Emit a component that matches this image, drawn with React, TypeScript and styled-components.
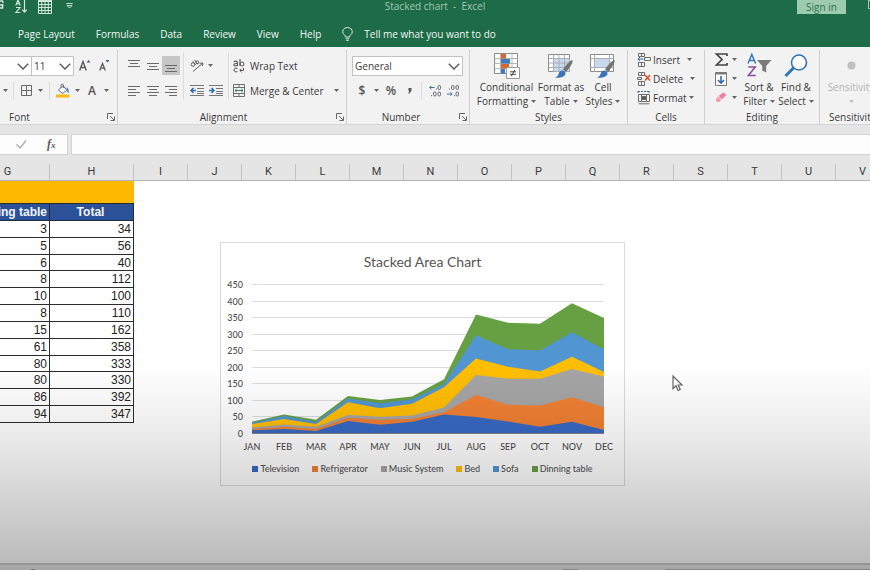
import React from "react";
import styled, { createGlobalStyle } from "styled-components";

const UI = `"Open Sans", "Noto Sans", sans-serif`;
const SHEET = `"Liberation Sans", Arial, sans-serif`;
const CHART = `Lato, "Open Sans", sans-serif`;

const GlobalStyle = createGlobalStyle`
  *, *::before, *::after { box-sizing: border-box; }
  body { margin: 0; overflow: hidden; background: #fff; }
  button, select, input { font: inherit; color: inherit; margin: 0; padding: 0; border: 0; background: none; border-radius: 0; }
  button { cursor: pointer; }
  svg { display: block; flex: none; overflow: visible; }
`;

const Window = styled.div`
  display: flex;
  flex-direction: column;
  height: 100vh;
  overflow: hidden;
  position: relative;
  font-family: ${UI};
  font-size: 10px;
  font-weight: 500;
  line-height: 14px;
  color: #3a3a3a;
`;

/* ---------- title bar and tabs ---------- */

const TitleBar = styled.header`
  display: grid;
  grid-template-columns: 1fr auto 1fr;
  align-items: start;
  height: 20px;
  background: #1e6b47;
  color: #a3c8b3;
`;
const QuickAccess = styled.div`
  display: flex;
  align-items: flex-start;
`;
const QuickButton = styled.button<{ $w: number }>`
  display: flex;
  justify-content: center;
  width: ${(p) => p.$w}px;
  height: 15px;
  color: #d3e6da;
`;
const DocTitle = styled.h1`
  margin: 0;
  font-size: 10px;
  line-height: 13px;
  font-weight: 400;
  white-space: pre;
`;
const TitleRight = styled.div`
  display: flex;
  justify-content: flex-end;
  gap: 22px;
`;
const SignIn = styled.button`
  width: 49px;
  height: 14px;
  line-height: 13px;
  background: #9ccbb0;
  color: #2c7350;
`;
const DisplayOptions = styled.button`
  width: 2px;
  height: 9px;
  border: 1px solid #a3c8b3;
  border-right: 0;
`;
const Tabs = styled.nav`
  display: flex;
  align-items: center;
  gap: 21px;
  height: 27px;
  padding-left: 18px;
  background: #1e6b47;
  color: #f0f8f3;
`;
const Tab = styled.button`
  white-space: nowrap;
`;
const TellMe = styled.button`
  display: flex;
  align-items: center;
  gap: 11px;
  white-space: nowrap;
`;

/* ---------- ribbon ---------- */

const Ribbon = styled.div`
  display: flex;
  height: 78px;
  background: #f2f2f2;
  border-bottom: 1px solid #d4d4d4;
  overflow: hidden;
`;
const Group = styled.section<{ $w: number; $last?: boolean }>`
  display: flex;
  flex-direction: column;
  flex: ${(p) => (p.$last ? "1 0" : "0 0")} ${(p) => p.$w}px;
  min-width: 0;
  margin: 3px 0 0;
  border-right: ${(p) => (p.$last ? "0" : "1px solid #cfcfcf")};
`;
const GroupBody = styled.div<{ $pad?: number; $top?: number }>`
  display: flex;
  flex: 1;
  padding-left: ${(p) => p.$pad ?? 0}px;
  padding-top: ${(p) => p.$top ?? 3}px;
`;
const GroupFoot = styled.footer<{ $shift?: number; $start?: number }>`
  display: flex;
  justify-content: ${(p) => (p.$start ? "flex-start" : "center")};
  align-items: center;
  position: relative;
  height: 14px;
  padding-right: ${(p) => p.$shift ?? 0}px;
  padding-left: ${(p) => p.$start ?? 0}px;
  white-space: nowrap;
`;
const Launcher = styled.button`
  position: absolute;
  right: 2px;
  top: 3px;
`;
const Stack = styled.div`
  display: flex;
  flex-direction: column;
`;
const Line = styled.div<{ $h?: number }>`
  display: flex;
  align-items: center;
  height: ${(p) => p.$h ?? 25}px;
`;
const Slot = styled.button<{ $w: number; $on?: boolean }>`
  display: flex;
  align-items: center;
  justify-content: center;
  flex: none;
  width: ${(p) => p.$w}px;
  height: 19px;
  background: ${(p) => (p.$on ? "#c6c6c6" : "transparent")};
`;
const Rule = styled.span<{ $h?: number }>`
  flex: none;
  width: 1px;
  height: ${(p) => p.$h ?? 18}px;
  margin: 0 4px 0 3px;
  background: #dcdcdc;
`;
const Combo = styled.div<{ $w: number; $cut?: boolean }>`
  position: relative;
  width: ${(p) => p.$w}px;
  height: 20px;
  border: 1px solid #c3c3c3;
  border-left-width: ${(p) => (p.$cut ? 0 : 1)}px;
  margin-right: ${(p) => (p.$cut ? -1 : 0)}px;
  background: #fff;
  & > svg { position: absolute; right: 2px; top: 6px; pointer-events: none; }
`;
const ComboSelect = styled.select`
  appearance: none;
  display: block;
  width: 100%;
  height: 18px;
  padding-left: 2px;
  line-height: 18px;
`;
const Command = styled.button<{ $gap?: number }>`
  display: flex;
  align-items: center;
  gap: ${(p) => p.$gap ?? 4}px;
  white-space: nowrap;
`;
const CaretGap = styled.span`
  display: flex;
  margin-left: 5px;
`;
const Big = styled.button<{ $w: number; $dim?: boolean }>`
  display: flex;
  flex-direction: column;
  align-items: center;
  flex: none;
  width: ${(p) => p.$w}px;
  opacity: ${(p) => (p.$dim ? 0.35 : 1)};
`;
const BigIcon = styled.span`
  display: flex;
  align-items: center;
  justify-content: center;
  height: 29px;
`;
const BigText = styled.span`
  display: flex;
  align-items: center;
  justify-content: center;
  gap: 3px;
  height: 14px;
  white-space: nowrap;
`;
const Glyph = styled.span<{ $size: number }>`
  font-size: ${(p) => p.$size}px;
  font-weight: 600;
  color: #555;
`;

/* ---------- formula bar and sheet ---------- */

const FormulaRow = styled.div`
  display: flex;
  gap: 3px;
  padding: 9px 0;
  background: #e5e5e5;
`;
const FormulaTools = styled.div`
  display: flex;
  align-items: center;
  width: 68px;
  height: 21px;
  padding-left: 13px;
  gap: 20px;
  background: #fdfdfd;
  border: 1px solid #d3d3d3;
  border-left: 0;
`;
const FxButton = styled.button`
  font-family: "Liberation Serif", serif;
  font-style: italic;
  font-weight: 700;
  font-size: 12px;
  color: #606060;
  & > small { font-size: 9px; }
`;
const FormulaInput = styled.input`
  flex: 1;
  height: 21px;
  padding: 0 4px;
  background: #fdfdfd;
  border: 1px solid #d3d3d3;
  border-right: 0;
`;
const ColumnHeads = styled.div`
  display: grid;
  grid-template-columns: 50px 84px repeat(14, 54px);
  height: 17px;
  background: #e5e5e5;
  border-bottom: 1px solid #b5b5b5;
  overflow: hidden;
  font-family: Roboto, ${SHEET};
  font-size: 11px;
  font-weight: 400;
`;
const ColumnHead = styled.div<{ $shift?: number }>`
  border-right: 1px solid #c2c2c2;
  padding-right: ${(p) => p.$shift ?? 0}px;
  text-align: center;
  line-height: 16px;
`;
const Sheet = styled.main`
  position: relative;
  flex: 1;
  background: #fff;
`;
const Data = styled.table`
  width: 134px;
  height: 242px;
  table-layout: fixed;
  border-collapse: separate;
  border-spacing: 0;
  font-family: ${SHEET};
  font-size: 12px;
  font-weight: 400;
  line-height: 14px;
  color: #222;
  & tbody td {
    padding: 0 2px 0 0;
    text-align: right;
    border-right: 1px solid #2b2b2b;
    border-bottom: 1px solid #2b2b2b;
  }
`;
const Band = styled.td`
  height: 23px;
  padding: 0;
  background: #ffb900;
  border-bottom: 1px solid #2b2b2b;
`;
const Heading = styled.th`
  height: 17px;
  padding: 0 2px 0 0;
  background: #2b5299;
  color: #f2f5fa;
  border-right: 1px solid #1d2a44;
  border-bottom: 1px solid #1d2a44;
`;
const Clip = styled.span<{ $end?: boolean }>`
  display: flex;
  justify-content: ${(p) => (p.$end ? "flex-end" : "center")};
  overflow: hidden;
  white-space: nowrap;
`;

/* ---------- chart object ---------- */

const ChartBox = styled.figure`
  position: absolute;
  left: 220px;
  top: 61px;
  width: 405px;
  height: 244px;
  margin: 0;
  padding-top: 10px;
  background: #fff;
  border: 1px solid #dadada;
  font-family: ${CHART};
  color: #555;
`;
const ChartTitle = styled.figcaption`
  text-align: center;
  font-size: 14px;
  font-weight: 400;
  line-height: 18px;
`;
const Legend = styled.ul`
  display: flex;
  justify-content: center;
  gap: 13px;
  margin: 0;
  padding: 0;
  list-style: none;
  font-size: 9px;
  line-height: 16px;
`;
const LegendItem = styled.li<{ $c: string }>`
  display: flex;
  align-items: center;
  gap: 2px;
  white-space: nowrap;
  &::before { content: ""; width: 6px; height: 6px; background: ${(p) => p.$c}; }
`;
const Shade = styled.div`
  position: absolute;
  left: 0;
  right: 0;
  bottom: 0;
  height: 205px;
  pointer-events: none;
  background: linear-gradient(rgba(0, 0, 0, 0), rgba(0, 0, 0, 0.085) 37%, rgba(0, 0, 0, 0.28));
`;
const Pointer = styled.svg`
  position: absolute;
  left: 672px;
  top: 194px;
`;
const StatusBar = styled.footer`
  display: grid;
  grid-template-columns: 27px 1fr 15px 87px 205px;
  height: 7px;
  padding-top: 4px;
  overflow: hidden;
  background: #e6e6e6;
  border-top: 2px solid #cbcbcb;
`;
const RecordDot = styled.span`
  width: 12px;
  height: 12px;
  border-radius: 6px;
  background: #999;
`;
const StatusMark = styled.span`
  height: 4px;
  background: #b4b4b4;
`;

/* ---------- icons ---------- */

const Caret = ({ c = "#666" }: { c?: string }) => (
  <svg width="5" height="3" viewBox="0 0 5 3"><path d="M0 0h5L2.5 3z" fill={c} /></svg>
);
const Chevron = () => (
  <svg width="12" height="7" viewBox="0 0 12 7"><path d="M.8.8 6 6 11.2.8" fill="none" stroke="#555" strokeWidth="1.3" /></svg>
);
const LaunchIcon = () => (
  <svg width="8" height="8" viewBox="0 0 8 8" fill="none" stroke="#666"><path d="M.5 6V.5H6M3 3l4 4M7.5 3.500v4h-4" /></svg>
);
const Lines = ({ rows }: { rows: [number, number, number][] }) => (
  <svg width="12" height="12" viewBox="0 0 12 12" stroke="#6a6a6a">
    {rows.map(([x1, x2, y]) => <path key={y} d={`M${x1} ${y}H${x2}`} />)}
  </svg>
);
const IndentIcon = ({ out }: { out?: boolean }) => (
  <svg width="14" height="12" viewBox="0 0 14 12" fill="none">
    <path d="M0 .5h14M7 3.500h7M7 6.500h7M0 10.500h14M7 8.500h7" stroke="#777" />
    {out ? <path d="M6 5.500H1M3.500 3 1 5.500 3.500 8" stroke="#2b6cb0" strokeWidth="1.500" />
      : <path d="M0 5.500h5M2.500 3 5 5.500 2.500 8" stroke="#2b6cb0" strokeWidth="1.500" />}
  </svg>
);
const SortAZ = () => (
  <svg width="13" height="14" viewBox="0 0 13 14" fill="none" stroke="currentColor">
    <path d="M.8 5.500 3 0l2.200 5.500M1.600 3.700h2.800M1 7.500h4L1 12.500h4.300M9.500 0v12M7.300 9.700l2.200 2.500 2.200-2.500" strokeWidth="1.200" />
  </svg>
);
const GridIcon = () => (
  <svg width="14" height="14" viewBox="0 0 14 14" fill="none" stroke="currentColor">
    <path d="M.5 0v13.500h13V0M.5 1.500h13M.5 4.500h13M.5 7.500h13M.5 10.500h13M3.700 1v12M7 1v12M10.300 1v12" />
    <path d="M.5 1h13" strokeWidth="2" />
  </svg>
);
const Customize = () => (
  <svg width="7" height="10" viewBox="0 0 7 10" fill="none" stroke="currentColor"><path d="M.3 3.500h6.400M1 5.500h5L3.500 8z" strokeWidth=".9" /></svg>
);
const Bulb = () => (
  <svg width="11" height="14" viewBox="0 0 11 14" fill="none" stroke="#dcece2">
    <path d="M3.500 10c0-2-2.800-2.600-2.800-5.200a4.800 4.300 0 0 1 9.600 0C10.300 7.400 7.500 8 7.500 10zM3.700 11.800h3.600M4.300 13.400h2.400" />
  </svg>
);
const GrowA = ({ down }: { down?: boolean }) => (
  <svg width={down ? 11 : 12} height="13" viewBox={down ? "0 0 11 13" : "0 0 12 13"} fill="none" stroke="#5a5a5a">
    {down ? <path d="M.7 11.500 3.500 4.500l2.800 7M1.700 9.200h3.600" strokeWidth="1.300" />
      : <path d="M.7 11.500 4 2.500l3.300 9M1.900 8.500h4.200" strokeWidth="1.400" />}
    {down ? <path d="M6.500 1h4L8.500 3.500z" fill="#3d5a80" stroke="none" />
      : <path d="M7.500 3.500h4L9.500 1z" fill="#3d5a80" stroke="none" />}
  </svg>
);
const Borders = () => (
  <svg width="11" height="11" viewBox="0 0 11 11" fill="none" stroke="#6a6a6a"><path d="M.5.5h10v10H.5zM5.500.5v10M.5 5.500h10" /></svg>
);
const Fill = () => (
  <svg width="14" height="14" viewBox="0 0 14 14" fill="none">
    <path d="M2.500 6 7 1.800l3.800 4.400L6.500 9.500z" fill="#fff" stroke="#5c6b7c" />
    <path d="M5 4V1.500a1.300 1.300 0 0 1 2.600 0V4" stroke="#5c6b7c" />
    <path d="M10 3.500c2 0 3 2 2.800 5.500-1.500-.5-1.800-2-1.500-3.500z" fill="#3272b5" />
    <path d="M0 10.500h13.500v3H0z" fill="#fdb913" />
  </svg>
);
const Orient = () => (
  <svg width="14" height="13" viewBox="0 0 14 13" fill="none" stroke="#5f5f5f">
    <circle cx="3" cy="5.500" r="1.800" /><path d="M2.800 2.200 5.700 6M4.500.8 8 5.200" />
    <circle cx="7.300" cy="3.300" r="1.500" /><path d="M3 12.500 12.800 4M12.800 4l-3.200.3M12.800 4l-.4 3.200" />
  </svg>
);
const WrapIcon = () => (
  <svg width="12" height="14" viewBox="0 0 12 14" fill="none" stroke="#555">
    <path d="M.8 2.800C3 1.500 4.500 2.300 4.500 4v3M4.500 4.600C2.500 4.400.8 4.800.8 6s2.500 1.400 3.700 0M7 0v7" strokeWidth="1.100" /><circle cx="9" cy="5" r="2" />
    <path d="M4.500 9.500C2.500 8.500 1 9.500 1 11s1.500 2.400 3.500 1.600M10.500 9v2.500H7M8.500 9.800 6.800 11.500l1.700 1.700" />
  </svg>
);
const MergeIcon = () => (
  <svg width="12" height="13" viewBox="0 0 12 13" fill="none" stroke="#6f6f6f">
    <path d="M.5.5h11v12H.5zM.5 3.500h11M.5 9.500h11M6 .5v3M6 9.500v3" />
    <path d="M2 6.500h8M3.700 4.900 2 6.500l1.700 1.600M8.300 4.900 10 6.500 8.300 8.100" stroke="#3d7a64" />
  </svg>
);
const Decimal = ({ less }: { less?: boolean }) => (
  <svg width="13" height="12" viewBox="0 0 13 12" fill="none" stroke="#666">
    {less ? (
      <>
        <rect x="4.500" y=".5" width="2.500" height="4" rx="1.200" /><rect x="9" y=".5" width="2.500" height="4" rx="1.200" />
        <rect x="9" y="7" width="2.500" height="4" rx="1.200" /><path d="M0 9h5M3.500 7.300 5.200 9 3.500 10.700" stroke="#3b6ea8" />
        <path d="M2 4h1M7 10.700h1" />
      </>
    ) : (
      <>
        <rect x="9" y=".5" width="2.500" height="4" rx="1.200" /><rect x="4.500" y="7" width="2.500" height="4" rx="1.200" />
        <rect x="9" y="7" width="2.500" height="4" rx="1.200" /><path d="M5.500 2.500H.7M2.400.8.7 2.500l1.700 1.700" stroke="#3b6ea8" />
        <path d="M7 4h1M2 10.700h1" />
      </>
    )}
  </svg>
);
const CondIcon = () => (
  <svg width="26" height="26" viewBox="0 0 26 26" fill="none">
    <path d="M.5.5h23v20H.5z" fill="#fff" stroke="#8a8a8a" />
    <path d="M.5 5.500h23M.5 10.500h23M.5 15.500h23M6.500.5v20M18 .5v20" stroke="#b5b5b5" />
    <path d="M7 1h5v4.500H7zM7 11h8v4.500H7z" fill="#d9642c" /><path d="M7 6h9v4.500H7zM7 16h4v4.500H7z" fill="#3d7dbf" />
    <path d="M12.500 14.500h13v11h-13z" fill="#fff" stroke="#999" />
    <path d="M16 18.800h6M16 21.300h6M20.800 16.800l-3.500 6.500" stroke="#444" />
  </svg>
);
const Brush = () => (
  <>
    <path d="M24.500 6.500c1.500 1-4 9-6.500 11.500l-3-2.500c2-3 8-10.500 9.500-9z" fill="#747474" />
    <path d="M14.500 16.500c2 .3 3.200 1.700 3 3.200-.5 3-5 4.500-10.500 3.800 2.500-.7 3-2 3.700-4 .6-2 2-3.200 3.800-3z" fill="#3b74b8" />
  </>
);
const TableStyle = () => (
  <svg width="26" height="24" viewBox="0 0 26 24" fill="none">
    <path d="M.5.5h21v17H.5z" fill="#fff" stroke="#8a8a8a" /><path d="M5.500 5h16v12.500h-16z" fill="#c9d8ec" />
    <path d="M.5 4.500h21M.5 9h21M.5 13.500h21M5.500.5v17M11 .5v17M16.500.5v17" stroke="#a9b0ba" /><Brush />
  </svg>
);
const CellStyle = () => (
  <svg width="26" height="24" viewBox="0 0 26 24" fill="none">
    <path d="M.5.5h23v17H.5z" fill="#fff" stroke="#8a8a8a" /><path d="M5 4.500h14v9H5z" fill="#c9d8ec" />
    <path d="M.5 4.500h23M.5 13.500h23M4.500.5v17M19.500.5v17" stroke="#a9b0ba" /><Brush />
  </svg>
);
const InsertIcon = () => (
  <svg width="14" height="14" viewBox="0 0 14 14" fill="none" stroke="#6d6d6d">
    <path d="M1.500.5h6v3h-6zM4.500.5v3M1.500 9.500h6v4h-6zM4.500 9.500v4M7.500 4.500h6v3h-6z" /><path d="M6.500 6H1M3 4 1 6l2 2" stroke="#2b6cb0" />
  </svg>
);
const DeleteIcon = () => (
  <svg width="14" height="14" viewBox="0 0 14 14" fill="none" stroke="#6d6d6d">
    <path d="M1.500.5h6v3h-6zM4.500.5v3M1.500 9.500h6v4h-6zM4.500 9.500v4M.5 5.500h4v2h-4z" /><path d="M8 3l5 5.500M13 3 8 8.500" stroke="#d9482b" strokeWidth="1.400" />
  </svg>
);
const FormatIcon = () => (
  <svg width="14" height="14" viewBox="0 0 14 14" fill="none" stroke="#6d6d6d">
    <path d="M1 .5h11M1 0v2M12 0v2" stroke="#3d6a9e" strokeDasharray="2 1" /><path d="M1.500 3.500h11v7h-11zM1.500 12.800h11M4.500 3.500v7M9.500 3.500v7" /><path d="M5 5.500h4v3H5z" fill="#555" />
  </svg>
);
const Sigma = () => (
  <svg width="13" height="13" viewBox="0 0 13 13" fill="none" stroke="#444"><path d="M12 3V1H1.500L7 6.500 1.500 12H12v-2" strokeWidth="1.700" /></svg>
);
const FillDown = () => (
  <svg width="12" height="14" viewBox="0 0 12 14" fill="none">
    <path d="M.5.5h11v13H.5z" fill="#fff" stroke="#7b7b7b" /><path d="M0 1.500h12" stroke="#7b7b7b" strokeWidth="2" /><path d="M6 4v7M3 8l3 3.200L9 8" stroke="#2b6cb0" strokeWidth="1.600" />
  </svg>
);
const Eraser = () => (
  <svg width="12" height="11" viewBox="0 0 12 11"><path d="m3.500 4 5-3.800 3 3-4.700 4z" fill="#ee8298" /><path d="m2.900 4.500 3.300 3.200L4.500 10H2.200L.5 8.200z" fill="#f19bab" /></svg>
);
const SortFilter = () => (
  <svg width="25" height="23" viewBox="0 0 25 23" fill="none">
    <path d="M1 9.500 4.800.5l3.800 9M2.300 6.500h5" stroke="#3c76b5" strokeWidth="1.500" /><path d="M1.300 13h7L1.300 21.500h7.500" stroke="#8a4ba0" strokeWidth="1.500" />
    <path d="M10 6h14.500l-5.300 6v6.500l-4-2V12z" fill="#7a7a7a" />
  </svg>
);
const FindIcon = () => (
  <svg width="24" height="24" viewBox="0 0 24 24" fill="none" stroke="#2f73b8">
    <circle cx="15" cy="8.500" r="7.500" fill="#fff" strokeWidth="1.600" /><path d="M9.500 14 1.500 22" strokeWidth="3" />
  </svg>
);
const Check = () => (
  <svg width="14" height="9" viewBox="0 0 14 9" fill="none" stroke="#b0b0b0"><path d="M3.500 4.500 7 8l6-7.500" strokeWidth="1.500" /></svg>
);

/* ---------- data ---------- */

const ROWS = [[3, 34], [5, 56], [6, 40], [8, 112], [10, 100], [8, 110], [15, 162], [61, 358], [80, 333], [80, 330], [86, 392], [94, 347]];
const MONTHS = ["JAN", "FEB", "MAR", "APR", "MAY", "JUN", "JUL", "AUG", "SEP", "OCT", "NOV", "DEC"];
const SERIES = [
  { name: "Television", color: "#3769c4", top: [8, 12, 6, 36, 25, 34, 56, 48, 35, 19, 34, 9] },
  { name: "Refrigerator", color: "#f08033", top: [12, 19, 12, 46, 40, 43, 63, 115, 85, 83, 108, 78] },
  { name: "Music System", color: "#a5a5a5", top: [17, 26, 19, 54, 49, 53, 77, 175, 164, 164, 193, 171] },
  { name: "Bed", color: "#ffbe00", top: [27, 42, 27, 93, 75, 88, 138, 225, 200, 186, 230, 184] },
  { name: "Sofa", color: "#5196d3", top: [31, 51, 34, 104, 90, 102, 147, 295, 253, 249, 304, 252] },
  { name: "Dinning table", color: "#67a043", top: ROWS.map((r) => r[1]) },
];
const LETTERS = "GHIJKLMNOPQRSTUV".split("");

const px = (i: number) => 31 + (i * 352) / 11;
const py = (v: number) => 162 - (v * 149) / 450;

const Plot = () => (
  <svg width="403" height="190" viewBox="0 0 403 190" role="img" aria-label="Stacked area chart">
    {Array.from({ length: 10 }, (_, i) => i * 50).map((v) => (
      <g key={v}>
        <path d={`M31 ${Math.round(py(v)) + 0.5}H383`} stroke="#dcdedf" />
        <text x="22" y={Math.round(py(v)) + 4} textAnchor="end" fontSize="9" fill="#505050">{v}</text>
      </g>
    ))}
    {[...SERIES].reverse().map((s) => (
      <path key={s.name} fill={s.color} d={`M31 162.500 ${s.top.map((v, i) => `L${px(i)} ${py(v)}`).join(" ")} L383 162.500z`} />
    ))}
    {MONTHS.map((m, i) => (
      <text key={m} x={px(i)} y="179" textAnchor="middle" fontSize="9" fill="#505050">{m}</text>
    ))}
  </svg>
);

export default function App() {
  return (
    <Window>
      <GlobalStyle />
      <TitleBar>
        <QuickAccess>
          <QuickButton $w={8} aria-label="Touch mode">
            <svg width="8" height="9" viewBox="0 0 8 9" fill="none" stroke="currentColor"><path d="M0 1.500C2 0 3 1 3 3M0 5h3.500M0 8h2.500V4" strokeWidth="1.500" /></svg>
          </QuickButton>
          <QuickButton $w={26} aria-label="Sort ascending"><SortAZ /></QuickButton>
          <QuickButton $w={22} aria-label="Table"><GridIcon /></QuickButton>
          <QuickButton $w={26} aria-label="Customize toolbar"><Customize /></QuickButton>
        </QuickAccess>
        <DocTitle>{"Stacked chart  -  Excel"}</DocTitle>
        <TitleRight>
          <SignIn>Sign in</SignIn>
          <DisplayOptions aria-label="Ribbon display options" />
        </TitleRight>
      </TitleBar>
      <Tabs>
        {["Page Layout", "Formulas", "Data", "Review", "View", "Help"].map((t) => <Tab key={t}>{t}</Tab>)}
        <TellMe><Bulb />Tell me what you want to do</TellMe>
      </Tabs>

      <Ribbon>
        <Group $w={118}>
          <GroupBody>
            <Stack>
              <Line>
                <Combo $w={32} $cut><ComboSelect aria-label="Font" defaultValue=""><option value="" /></ComboSelect><Chevron /></Combo>
                <Combo $w={43}><ComboSelect aria-label="Font size"><option>11</option></ComboSelect><Chevron /></Combo>
                <Slot $w={21} aria-label="Increase font size"><GrowA /></Slot>
                <Slot $w={18} aria-label="Decrease font size"><GrowA down /></Slot>
              </Line>
              <Line>
                <Slot $w={10} aria-label="Underline options"><Caret /></Slot>
                <Rule />
                <Slot $w={17} aria-label="Borders"><Borders /></Slot>
                <Slot $w={11} aria-label="Border options"><Caret /></Slot>
                <Rule />
                <Slot $w={18} aria-label="Fill color"><Fill /></Slot>
                <Slot $w={10} aria-label="Fill options"><Caret /></Slot>
                <Slot $w={20} aria-label="Font color"><Glyph $size={12}>A</Glyph></Slot>
                <Slot $w={8} aria-label="Font color options"><Caret /></Slot>
              </Line>
            </Stack>
          </GroupBody>
          <GroupFoot $shift={78}>Font<Launcher aria-label="Font settings"><LaunchIcon /></Launcher></GroupFoot>
        </Group>

        <Group $w={229}>
          <GroupBody $pad={7}>
            <Stack>
              <Line>
                <Slot $w={18} aria-label="Top align"><Lines rows={[[0, 12, 0.5], [2, 10, 3.5], [0, 12, 6.5]]} /></Slot>
                <Slot $w={19} aria-label="Middle align"><Lines rows={[[0, 12, 3.5], [2, 10, 6.5], [0, 12, 9.5]]} /></Slot>
                <Slot $w={18} $on aria-label="Bottom align"><Lines rows={[[0, 12, 5.5], [2, 10, 8.5], [0, 12, 11.5]]} /></Slot>
              </Line>
              <Line>
                <Slot $w={18} aria-label="Align left"><Lines rows={[[0, 12, 1.5], [0, 8, 4.5], [0, 12, 7.5], [0, 8, 10.5]]} /></Slot>
                <Slot $w={19} aria-label="Center"><Lines rows={[[0, 12, 1.5], [2, 10, 4.5], [0, 12, 7.5], [2, 10, 10.5]]} /></Slot>
                <Slot $w={18} aria-label="Align right"><Lines rows={[[0, 12, 1.5], [4, 12, 4.5], [0, 12, 7.5], [4, 12, 10.5]]} /></Slot>
              </Line>
            </Stack>
            <Rule $h={46} />
            <Stack>
              <Line>
                <Slot $w={18} aria-label="Orientation"><Orient /></Slot>
                <Slot $w={8} aria-label="Orientation options"><Caret /></Slot>
              </Line>
              <Line>
                <Slot $w={18} aria-label="Decrease indent"><IndentIcon out /></Slot>
                <Slot $w={19} aria-label="Increase indent"><IndentIcon /></Slot>
              </Line>
            </Stack>
            <Rule $h={46} />
            <Stack>
              <Line><Command $gap={5}><WrapIcon />Wrap Text</Command></Line>
              <Line><Command $gap={5}><MergeIcon />Merge &amp; Center<CaretGap><Caret /></CaretGap></Command></Line>
            </Stack>
          </GroupBody>
          <GroupFoot $shift={17}>Alignment<Launcher aria-label="Alignment settings"><LaunchIcon /></Launcher></GroupFoot>
        </Group>

        <Group $w={123}>
          <GroupBody $pad={5}>
            <Stack>
              <Line><Combo $w={111}><ComboSelect aria-label="Number format"><option>General</option></ComboSelect><Chevron /></Combo></Line>
              <Line>
                <Slot $w={20} aria-label="Accounting format"><Glyph $size={12}>$</Glyph></Slot>
                <Slot $w={8} aria-label="Currency options"><Caret /></Slot>
                <Slot $w={22} aria-label="Percent style"><Glyph $size={12}>%</Glyph></Slot>
                <Slot $w={16} aria-label="Comma style"><svg width="4" height="6" viewBox="0 0 4 6"><path d="M.5 0h3v2.500L1.500 5.500H.3L1.200 3H.5z" fill="#555" /></svg></Slot>
                <Rule />
                <Slot $w={18} aria-label="Increase decimal"><Decimal /></Slot>
                <Slot $w={18} aria-label="Decrease decimal"><Decimal less /></Slot>
              </Line>
            </Stack>
          </GroupBody>
          <GroupFoot $shift={14}>Number<Launcher aria-label="Number settings"><LaunchIcon /></Launcher></GroupFoot>
        </Group>

        <Group $w={158}>
          <GroupBody $pad={6} $top={1}>
            <Big $w={61}><BigIcon><CondIcon /></BigIcon><BigText>Conditional</BigText><BigText>Formatting <Caret /></BigText></Big>
            <Big $w={48}><BigIcon><TableStyle /></BigIcon><BigText>Format as</BigText><BigText>Table <Caret /></BigText></Big>
            <Big $w={36}><BigIcon><CellStyle /></BigIcon><BigText>Cell</BigText><BigText>Styles <Caret /></BigText></Big>
          </GroupBody>
          <GroupFoot>Styles</GroupFoot>
        </Group>

        <Group $w={77}>
          <GroupBody $pad={9} $top={0}>
            <Stack>
              <Line $h={19}><Command $gap={2}><InsertIcon />Insert<CaretGap><Caret /></CaretGap></Command></Line>
              <Line $h={19}><Command $gap={2}><DeleteIcon />Delete<CaretGap><Caret /></CaretGap></Command></Line>
              <Line $h={19}><Command $gap={2}><FormatIcon />Format<Caret /></Command></Line>
            </Stack>
          </GroupBody>
          <GroupFoot>Cells</GroupFoot>
        </Group>

        <Group $w={115}>
          <GroupBody $pad={7} $top={0}>
            <Stack>
              <Line $h={19}><Slot $w={18} aria-label="AutoSum"><Sigma /></Slot><Slot $w={9} aria-label="AutoSum options"><Caret /></Slot></Line>
              <Line $h={19}><Slot $w={18} aria-label="Fill"><FillDown /></Slot><Slot $w={9} aria-label="Fill direction"><Caret /></Slot></Line>
              <Line $h={19}><Slot $w={18} aria-label="Clear"><Eraser /></Slot><Slot $w={9} aria-label="Clear options"><Caret /></Slot></Line>
            </Stack>
            <Stack>
              <Line $h={59}>
                <Big $w={40}><BigIcon><SortFilter /></BigIcon><BigText>Sort &amp;</BigText><BigText>Filter <Caret /></BigText></Big>
                <Big $w={34}><BigIcon><FindIcon /></BigIcon><BigText>Find &amp;</BigText><BigText>Select <Caret /></BigText></Big>
              </Line>
            </Stack>
          </GroupBody>
          <GroupFoot>Editing</GroupFoot>
        </Group>

        <Group $w={50} $last>
          <GroupBody $pad={8} $top={1}>
            <Big $w={46} $dim disabled>
              <BigIcon><svg width="9" height="9" viewBox="0 0 9 9"><circle cx="4.500" cy="4.500" r="4" fill="#666" /></svg></BigIcon>
              <BigText>Sensitivity</BigText>
              <BigText><Caret /></BigText>
            </Big>
          </GroupBody>
          <GroupFoot $start={9}>Sensitivity</GroupFoot>
        </Group>
      </Ribbon>

      <FormulaRow>
        <FormulaTools>
          <button aria-label="Enter"><Check /></button>
          <FxButton aria-label="Insert function">f<small>x</small></FxButton>
        </FormulaTools>
        <FormulaInput aria-label="Formula bar" />
      </FormulaRow>
      <ColumnHeads>
        {LETTERS.map((l) => <ColumnHead key={l} $shift={l === "G" ? 34 : 0}>{l}</ColumnHead>)}
      </ColumnHeads>

      <Sheet>
        <Data>
          <colgroup><col width="50" /><col width="84" /></colgroup>
          <thead>
            <tr><Band colSpan={2} /></tr>
            <tr>
              <Heading scope="col"><Clip $end>Dinning table</Clip></Heading>
              <Heading scope="col"><Clip>Total</Clip></Heading>
            </tr>
          </thead>
          <tbody>
            {ROWS.map(([a, b], i) => <tr key={i}><td>{a}</td><td>{b}</td></tr>)}
          </tbody>
        </Data>
        <ChartBox>
          <ChartTitle>Stacked Area Chart</ChartTitle>
          <Plot />
          <Legend>{SERIES.map((s) => <LegendItem key={s.name} $c={s.color}>{s.name}</LegendItem>)}</Legend>
        </ChartBox>
        <Pointer width="11" height="17" viewBox="0 0 11 17">
          <path d="M1 1v12.500l3-2.800 2 4.800 2.200-1-2-4.500h3.800z" fill="#fff" stroke="#666" strokeWidth="1.200" />
        </Pointer>
      </Sheet>
      <StatusBar><span /><RecordDot /><StatusMark /><span /><StatusMark /></StatusBar>
      <Shade />
    </Window>
  );
}
